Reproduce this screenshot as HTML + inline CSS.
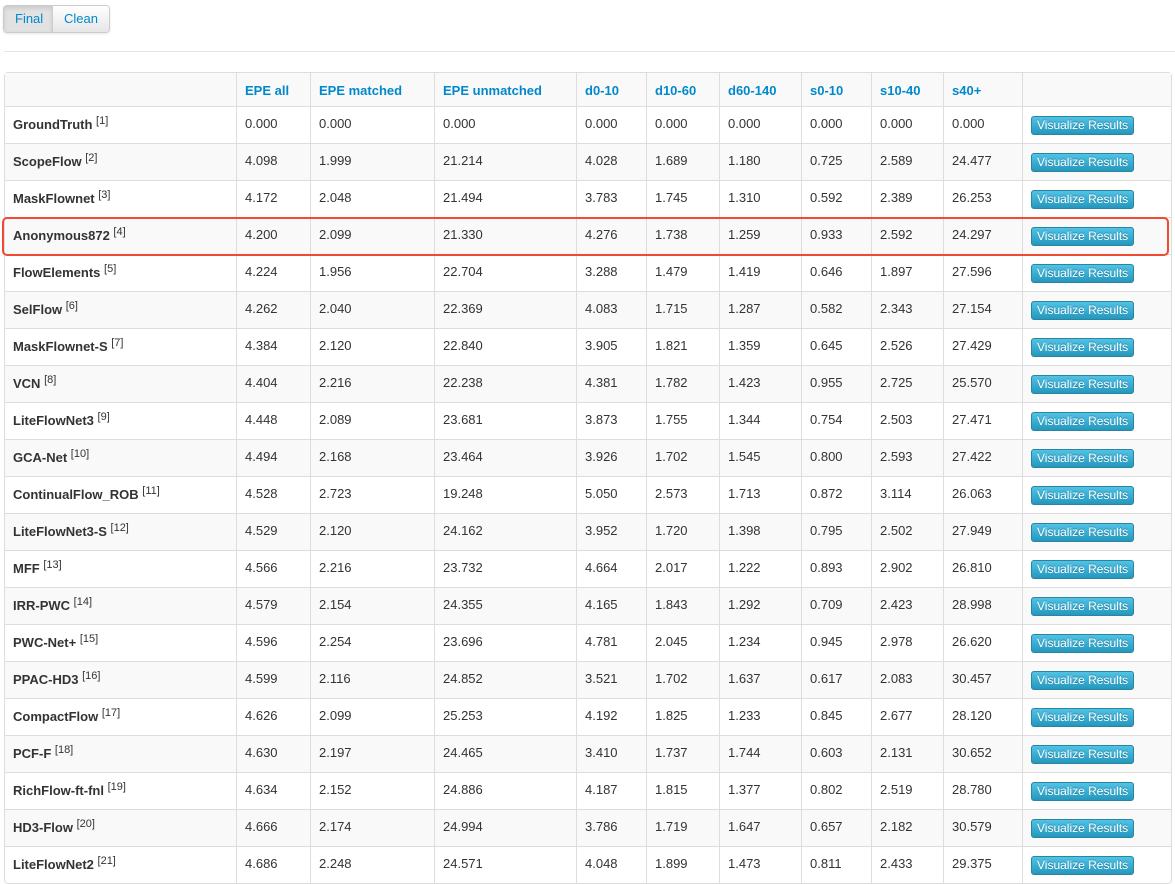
<!DOCTYPE html>
<html><head><meta charset="utf-8"><style>
body{margin:0;background:#fff;font-family:"Liberation Sans",Helvetica,Arial,sans-serif;font-size:13px;color:#333;width:1175px;height:881px;overflow:hidden;position:relative}
.bg{position:absolute;left:3px;top:5px;height:26px;display:flex;border:1px solid #ccc;border-radius:4px;overflow:hidden;box-shadow:0 1px 2px rgba(0,0,0,.1)}
.bg div{padding:0 11px;line-height:26px;color:#0088cc;font-size:13px;background:linear-gradient(#fff,#e6e6e6)}
.bg div.a{background:#e2e2e2;box-shadow:inset 0 2px 4px rgba(0,0,0,.12);border-right:1px solid #ccc;width:26px}
.hr{position:absolute;left:4px;right:0;top:51px;border-top:1px solid #e5e5e5}
table{position:absolute;left:4px;top:72px;width:1168px;border-collapse:separate;border-spacing:0;border:1px solid #ddd;border-radius:4px;table-layout:fixed}
td,th{height:37px;padding:0 8px;border-left:1px solid #ddd;border-top:1px solid #ddd;text-align:left;vertical-align:middle;box-sizing:border-box}
th{height:33px;border-top:0;color:#0088cc;font-weight:bold;background:#f9f9f9;padding-top:2px}
tr td:first-child,tr th:first-child{border-left:0}
tbody tr:nth-child(even) td{background:#f9f9f9}
td:first-child{font-weight:bold;padding-top:0}
sup{font-weight:normal;font-size:11px;vertical-align:5px}
td{padding-bottom:3px}
.b{display:inline-block;background:linear-gradient(#5bc0de,#2f96b4);border:1px solid #2a85a0;color:#fff;font-size:12px;line-height:17px;padding:0 5px;border-radius:3px;text-shadow:0 -1px 0 rgba(0,0,0,.25);margin-top:3px}
.b{background:linear-gradient(#4fc3e6,#2597bd)}
.red{position:absolute;left:2px;top:217px;width:1163px;height:35px;border:2px solid #f04a30;border-radius:5px}
</style></head><body>
<div class="bg"><div class="a">Final</div><div>Clean</div></div>
<div class="hr"></div>
<table>
<colgroup><col style="width:231px"><col style="width:74px"><col style="width:124px"><col style="width:142px"><col style="width:70px"><col style="width:73px"><col style="width:82px"><col style="width:70px"><col style="width:72px"><col style="width:79px"><col></colgroup>
<thead><tr><th></th><th>EPE all</th><th>EPE matched</th><th>EPE unmatched</th><th>d0-10</th><th>d10-60</th><th>d60-140</th><th>s0-10</th><th>s10-40</th><th>s40+</th><th></th></tr></thead>
<tbody>
<tr><td>GroundTruth <sup>[1]</sup></td><td>0.000</td><td>0.000</td><td>0.000</td><td>0.000</td><td>0.000</td><td>0.000</td><td>0.000</td><td>0.000</td><td>0.000</td><td><span class="b">Visualize Results</span></td></tr>
<tr><td>ScopeFlow <sup>[2]</sup></td><td>4.098</td><td>1.999</td><td>21.214</td><td>4.028</td><td>1.689</td><td>1.180</td><td>0.725</td><td>2.589</td><td>24.477</td><td><span class="b">Visualize Results</span></td></tr>
<tr><td>MaskFlownet <sup>[3]</sup></td><td>4.172</td><td>2.048</td><td>21.494</td><td>3.783</td><td>1.745</td><td>1.310</td><td>0.592</td><td>2.389</td><td>26.253</td><td><span class="b">Visualize Results</span></td></tr>
<tr><td>Anonymous872 <sup>[4]</sup></td><td>4.200</td><td>2.099</td><td>21.330</td><td>4.276</td><td>1.738</td><td>1.259</td><td>0.933</td><td>2.592</td><td>24.297</td><td><span class="b">Visualize Results</span></td></tr>
<tr><td>FlowElements <sup>[5]</sup></td><td>4.224</td><td>1.956</td><td>22.704</td><td>3.288</td><td>1.479</td><td>1.419</td><td>0.646</td><td>1.897</td><td>27.596</td><td><span class="b">Visualize Results</span></td></tr>
<tr><td>SelFlow <sup>[6]</sup></td><td>4.262</td><td>2.040</td><td>22.369</td><td>4.083</td><td>1.715</td><td>1.287</td><td>0.582</td><td>2.343</td><td>27.154</td><td><span class="b">Visualize Results</span></td></tr>
<tr><td>MaskFlownet-S <sup>[7]</sup></td><td>4.384</td><td>2.120</td><td>22.840</td><td>3.905</td><td>1.821</td><td>1.359</td><td>0.645</td><td>2.526</td><td>27.429</td><td><span class="b">Visualize Results</span></td></tr>
<tr><td>VCN <sup>[8]</sup></td><td>4.404</td><td>2.216</td><td>22.238</td><td>4.381</td><td>1.782</td><td>1.423</td><td>0.955</td><td>2.725</td><td>25.570</td><td><span class="b">Visualize Results</span></td></tr>
<tr><td>LiteFlowNet3 <sup>[9]</sup></td><td>4.448</td><td>2.089</td><td>23.681</td><td>3.873</td><td>1.755</td><td>1.344</td><td>0.754</td><td>2.503</td><td>27.471</td><td><span class="b">Visualize Results</span></td></tr>
<tr><td>GCA-Net <sup>[10]</sup></td><td>4.494</td><td>2.168</td><td>23.464</td><td>3.926</td><td>1.702</td><td>1.545</td><td>0.800</td><td>2.593</td><td>27.422</td><td><span class="b">Visualize Results</span></td></tr>
<tr><td>ContinualFlow_ROB <sup>[11]</sup></td><td>4.528</td><td>2.723</td><td>19.248</td><td>5.050</td><td>2.573</td><td>1.713</td><td>0.872</td><td>3.114</td><td>26.063</td><td><span class="b">Visualize Results</span></td></tr>
<tr><td>LiteFlowNet3-S <sup>[12]</sup></td><td>4.529</td><td>2.120</td><td>24.162</td><td>3.952</td><td>1.720</td><td>1.398</td><td>0.795</td><td>2.502</td><td>27.949</td><td><span class="b">Visualize Results</span></td></tr>
<tr><td>MFF <sup>[13]</sup></td><td>4.566</td><td>2.216</td><td>23.732</td><td>4.664</td><td>2.017</td><td>1.222</td><td>0.893</td><td>2.902</td><td>26.810</td><td><span class="b">Visualize Results</span></td></tr>
<tr><td>IRR-PWC <sup>[14]</sup></td><td>4.579</td><td>2.154</td><td>24.355</td><td>4.165</td><td>1.843</td><td>1.292</td><td>0.709</td><td>2.423</td><td>28.998</td><td><span class="b">Visualize Results</span></td></tr>
<tr><td>PWC-Net+ <sup>[15]</sup></td><td>4.596</td><td>2.254</td><td>23.696</td><td>4.781</td><td>2.045</td><td>1.234</td><td>0.945</td><td>2.978</td><td>26.620</td><td><span class="b">Visualize Results</span></td></tr>
<tr><td>PPAC-HD3 <sup>[16]</sup></td><td>4.599</td><td>2.116</td><td>24.852</td><td>3.521</td><td>1.702</td><td>1.637</td><td>0.617</td><td>2.083</td><td>30.457</td><td><span class="b">Visualize Results</span></td></tr>
<tr><td>CompactFlow <sup>[17]</sup></td><td>4.626</td><td>2.099</td><td>25.253</td><td>4.192</td><td>1.825</td><td>1.233</td><td>0.845</td><td>2.677</td><td>28.120</td><td><span class="b">Visualize Results</span></td></tr>
<tr><td>PCF-F <sup>[18]</sup></td><td>4.630</td><td>2.197</td><td>24.465</td><td>3.410</td><td>1.737</td><td>1.744</td><td>0.603</td><td>2.131</td><td>30.652</td><td><span class="b">Visualize Results</span></td></tr>
<tr><td>RichFlow-ft-fnl <sup>[19]</sup></td><td>4.634</td><td>2.152</td><td>24.886</td><td>4.187</td><td>1.815</td><td>1.377</td><td>0.802</td><td>2.519</td><td>28.780</td><td><span class="b">Visualize Results</span></td></tr>
<tr><td>HD3-Flow <sup>[20]</sup></td><td>4.666</td><td>2.174</td><td>24.994</td><td>3.786</td><td>1.719</td><td>1.647</td><td>0.657</td><td>2.182</td><td>30.579</td><td><span class="b">Visualize Results</span></td></tr>
<tr><td>LiteFlowNet2 <sup>[21]</sup></td><td>4.686</td><td>2.248</td><td>24.571</td><td>4.048</td><td>1.899</td><td>1.473</td><td>0.811</td><td>2.433</td><td>29.375</td><td><span class="b">Visualize Results</span></td></tr>
</tbody></table>
<div class="red"></div>
</body></html>
